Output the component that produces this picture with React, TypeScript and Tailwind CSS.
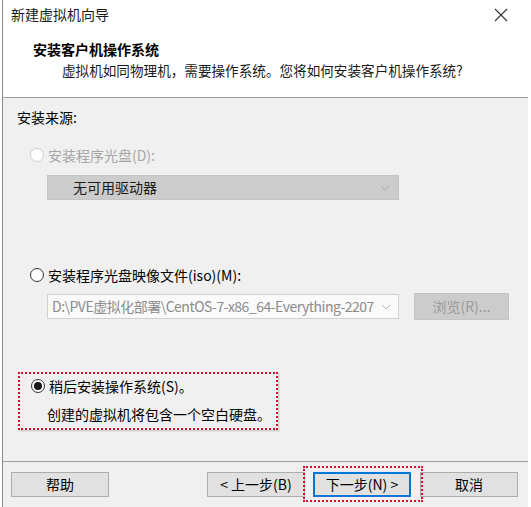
import React from 'react';

const font = "font-['Noto_Sans_CJK_SC','Liberation_Sans',sans-serif]";

interface RadioProps {
  checked?: boolean;
  disabled?: boolean;
}

const Radio: React.FC<RadioProps> = ({ checked, disabled }) => {
  return (
    <span
      className={`flex h-[14px] w-[14px] shrink-0 items-center justify-center rounded-full border bg-white ${
        disabled ? 'border-[#cfcfcf]' : 'border-[#333333]'
      }`}
    >
      {checked && <span className="h-[8px] w-[8px] rounded-full bg-[#1a1a1a]" />}
    </span>
  );
};

const Chevron: React.FC<{ color: string }> = ({ color }) => (
  <svg width="10" height="6" viewBox="0 0 10 6" fill="none">
    <path d="M1 1l4 4 4-4" stroke={color} strokeWidth="1" />
  </svg>
);

interface ButtonProps {
  label: string;
  focused?: boolean;
  className?: string;
}

const Button: React.FC<ButtonProps> = ({ label, focused, className = '' }) => {
  return (
    <button
      className={`flex h-[25px] w-[98px] items-center justify-center bg-[#e1e1e1] text-[14px] text-black ${
        focused ? 'border-2 border-[#0078d7]' : 'border border-[#adadad]'
      } ${className}`}
    >
      {label}
    </button>
  );
};

export default function App() {
  return (
    <div className={`h-[507px] w-[531px] overflow-hidden bg-white ${font} text-black`}>
      <div className="ml-[2px] flex h-[507px] w-[526px] flex-col border-l border-[#8a8a8a]">
        {/* title bar */}
        <div className="flex h-[29px] items-center justify-between pl-[8px] pr-[20px]">
          <span className="text-[14px] text-[#1a1a1a]">新建虚拟机向导</span>
          <svg width="14" height="14" viewBox="0 0 14 14" fill="none">
            <path d="M1 1l12 12M13 1L1 13" stroke="#333" strokeWidth="1.1" />
          </svg>
        </div>

        {/* header */}
        <div className="h-[69px] border-b border-[#a0a0a0] pl-[30px] pt-[10px]">
          <div className="text-[14px] font-bold leading-[20px]">安装客户机操作系统</div>
          <div className="mt-[1px] pl-[29px] text-[13.6px] leading-[20px] text-[#1a1a1a]">
            虚拟机如同物理机，需要操作系统。您将如何安装客户机操作系统?
          </div>
        </div>

        {/* body */}
        <div className="flex h-[364px] flex-col border-b border-[#a0a0a0] bg-[#f0f0f0] pl-[14px] pt-[9px]">
          <div className="text-[14px] leading-[20px]">安装来源:</div>

          <div className="mt-[18px] flex items-center gap-[4px] pl-[13px] text-[14px] leading-[20px] text-[#a6a6a6]">
            <Radio disabled />
            <span>安装程序光盘(D):</span>
          </div>

          <div className="ml-[30px] mt-[10px] flex h-[25px] w-[352px] items-center justify-between border border-[#c4c4c4] bg-[#cccccc] pl-[25px] pr-[8px]">
            <span className="text-[14px] text-[#1a1a1a]">无可用驱动器</span>
            <Chevron color="#a8a8a8" />
          </div>

          <div className="mt-[65px] flex items-center gap-[4px] pl-[13px] text-[14px] leading-[20px]">
            <Radio />
            <span>安装程序光盘映像文件(iso)(M):</span>
          </div>

          <div className="ml-[30px] mt-[8px] flex items-center gap-[15px]">
            <div className="flex h-[25px] w-[352px] items-center justify-between border border-[#d0d0d0] bg-[#fafafa] pl-[4px] pr-[7px]">
              <span className="whitespace-nowrap text-[14px] tracking-[-0.5px] text-[#8c8c8c]">
                D:\PVE虚拟化部署\CentOS-7-x86_64-Everything-2207
              </span>
              <Chevron color="#b5b5b5" />
            </div>
            <div className="flex h-[27px] w-[95px] items-center justify-center border border-[#c4c4c4] bg-[#cccccc] text-[14px] text-[#9a9a9a]">
              浏览(R)...
            </div>
          </div>

          <div className="ml-[1px] mt-[52px] flex h-[58px] w-[260px] flex-col border-2 border-dotted border-[#d0102a] pl-[11px] pt-[2px] shadow-[1px_1px_2px_rgba(0,0,0,0.2)]">
            <div className="flex items-center gap-[4px] text-[14px] leading-[20px]">
              <Radio checked />
              <span>稍后安装操作系统(S)。</span>
            </div>
            <div className="mt-[8px] pl-[16px] text-[14px] leading-[20px]">创建的虚拟机将包含一个空白硬盘。</div>
          </div>
        </div>

        {/* footer */}
        <div className="relative flex flex-1 bg-[#f0f0f0] pl-[8px] pt-[10px]">
          <Button label="帮助" />
          <Button label="< 上一步(B)" className="ml-[98px]" />
          <Button label="下一步(N) >" focused className="ml-[8px]" />
          <Button label="取消" className="ml-[9px]" />
          <div className="absolute left-[300px] top-[4px] h-[36px] w-[120px] border-2 border-dotted border-[#d0102a]" />
        </div>
      </div>
    </div>
  );
}
